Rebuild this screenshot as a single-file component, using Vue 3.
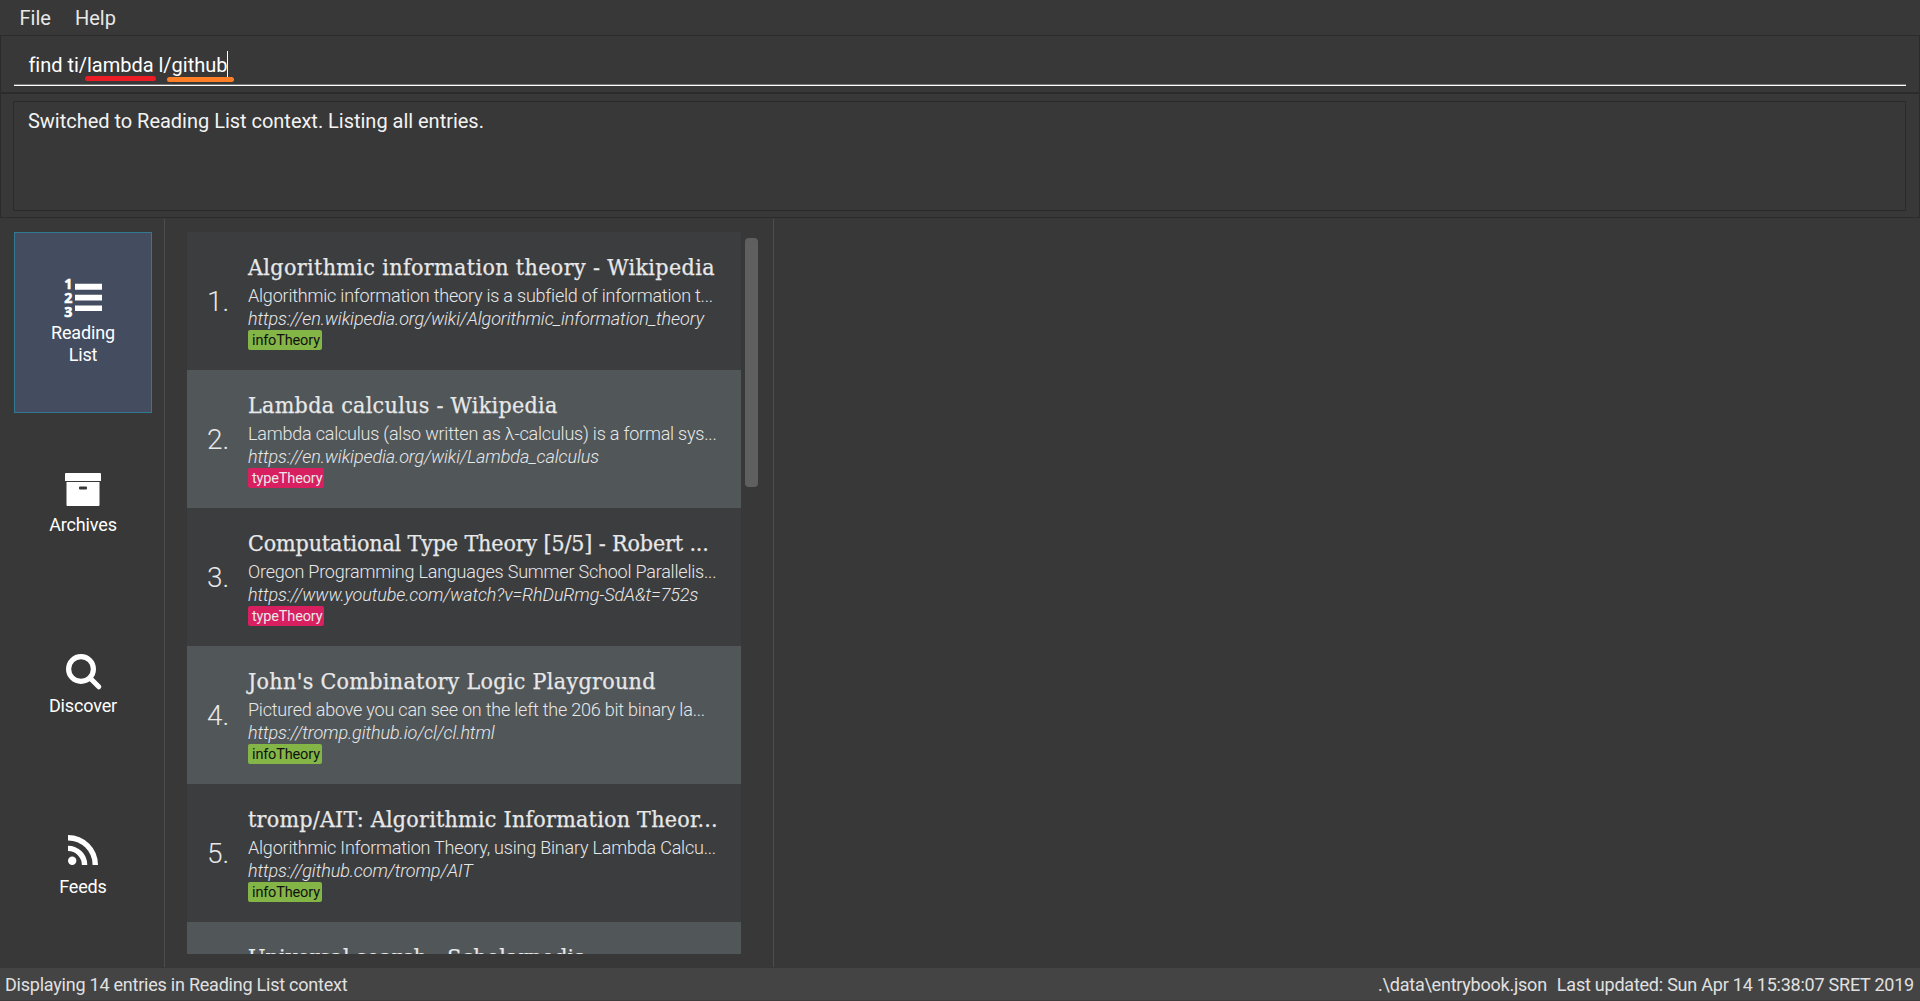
<script setup>
const entries = [
  { title: 'Algorithmic information theory - Wikipedia', spacing: 0.37, desc: 'Algorithmic information theory is a subfield of information t...', url: 'https://en.wikipedia.org/wiki/Algorithmic_information_theory', tag: 'infoTheory' },
  { title: 'Lambda calculus - Wikipedia', spacing: 0.3, desc: 'Lambda calculus (also written as λ-calculus) is a formal sys...', url: 'https://en.wikipedia.org/wiki/Lambda_calculus', tag: 'typeTheory' },
  { title: 'Computational Type Theory [5/5] - Robert ...', spacing: -0.13, desc: 'Oregon Programming Languages Summer School Parallelis...', url: 'https://www.youtube.com/watch?v=RhDuRmg-SdA&t=752s', tag: 'typeTheory' },
  { title: "John's Combinatory Logic Playground", spacing: 0.31, desc: 'Pictured above you can see on the left the 206 bit binary la...', url: 'https://tromp.github.io/cl/cl.html', tag: 'infoTheory' },
  { title: 'tromp/AIT: Algorithmic Information Theor...', spacing: 0.24, desc: 'Algorithmic Information Theory, using Binary Lambda Calcu...', url: 'https://github.com/tromp/AIT', tag: 'infoTheory' },
  { title: 'Universal search - Scholarpedia', spacing: 0.1 },
]
</script>

<template>
  <div class="window">
    <nav class="menubar"><span>File</span><span>Help</span></nav>

    <section class="command">
      <div class="field">
        <span>find ti/</span><span class="word red">lambda</span><span>&nbsp;l/</span><span class="word orange">github</span><i class="caret"></i>
      </div>
    </section>

    <section class="result">
      <div class="message">Switched to Reading List context. Listing all entries.</div>
    </section>

    <main class="content">
      <aside class="contexts">
        <div class="context selected">
          <svg width="40" height="40" viewBox="0 0 40 40">
            <g class="digits">
              <text x="0.3" y="11.2" textLength="8" lengthAdjust="spacingAndGlyphs">1</text>
              <text x="0.3" y="25" textLength="8" lengthAdjust="spacingAndGlyphs">2</text>
              <text x="0.3" y="38.6" textLength="8" lengthAdjust="spacingAndGlyphs">3</text>
            </g>
            <path d="M11 5.7h27v6H11zM11 16.7h27v5.7H11zM11 27.4h27v5.7H11z" />
          </svg>
          <span>Reading<br />List</span>
        </div>
        <div class="context archives">
          <svg width="36" height="34" viewBox="0 0 36 34">
            <path d="M1 0h34q1 0 1 1v7H0V1q0-1 1-1z" />
            <path fill-rule="evenodd" d="M1.500 9h33v23q0 1-1 1h-31q-1 0-1-1zM15 13.500q-1 0-1 1v1q0 1 1 1h6q1 0 1-1v-1q0-1-1-1z" />
          </svg>
          <span>Archives</span>
        </div>
        <div class="context discover">
          <svg width="36" height="36" viewBox="0 0 36 36">
            <circle cx="15" cy="15" r="12.400" class="stroke" />
            <path class="stroke handle" d="M24.500 24.500L32.800 32.800" />
          </svg>
          <span>Discover</span>
        </div>
        <div class="context feeds">
          <svg width="30" height="30" viewBox="0 0 30 30">
            <circle cx="4.200" cy="25.800" r="4.200" />
            <path class="stroke arc" d="M0 13.400A16.600 16.600 0 0 1 16.600 30M0 2.700A27.300 27.300 0 0 1 27.300 30" />
          </svg>
          <span>Feeds</span>
        </div>
      </aside>

      <section class="list-pane">
        <div class="list">
          <article v-for="(e, i) in entries" :key="i" class="entry">
            <div class="number"><span v-if="e.desc">{{ i + 1 }}.</span></div>
            <div class="details">
              <h2 :style="{ letterSpacing: e.spacing + 'px' }">{{ e.title }}</h2>
              <template v-if="e.desc">
                <p>{{ e.desc }}</p>
                <p class="url">{{ e.url }}</p>
                <span class="tag" :class="e.tag">{{ e.tag }}</span>
              </template>
            </div>
          </article>
        </div>
        <div class="track"><div class="thumb"></div></div>
      </section>
    </main>

    <footer class="status">
      <span class="count">Displaying 14 entries in Reading List context</span>
      <span class="file">.\data\entrybook.json</span>
      <span class="updated">Last updated: Sun Apr 14 15:38:07 SRET 2019</span>
    </footer>
  </div>
</template>

<style>
body { margin: 0; background: #383838; }
</style>

<style scoped>
* { box-sizing: border-box; }
.window {
  display: flex;
  flex-direction: column;
  width: 1920px;
  height: 1001px;
  overflow: hidden;
  background: #383838;
  color: #fff;
  font-family: Roboto, sans-serif;
  white-space: nowrap;
}
.menubar {
  display: flex;
  gap: 24px;
  height: 35px;
  padding: 6px 19.500px 0;
  font-size: 20px;
  line-height: 24px;
  color: #e8e8e8;
}
.command {
  height: 58px;
  padding: 13px 13px 0;
  border: 1px solid #2b2b2b;
}
.field {
  display: flex;
  height: 37px;
  padding: 4px 14.400px 0;
  border-bottom: 1px solid #fff;
  box-shadow: inset 0 -1px #777;
  font-size: 20px;
  line-height: 24px;
  letter-spacing: -0.02px;
}
.word { position: relative; }
.word::after {
  content: '';
  position: absolute;
  top: 23px;
  left: -2px;
  width: 71px;
  height: 5px;
  border-radius: 3px;
  background: #ed1c24;
}
.word.orange::after {
  top: 24px;
  left: -5px;
  width: 67px;
  background: #ff7f27;
}
.caret { width: 1px; height: 26px; margin-top: -2px; background: #fff; }
.result {
  height: 125px;
  padding: 7px 13px 0 12px;
  border: 1px solid #2b2b2b;
}
.message {
  height: 110px;
  padding: 7px 14px;
  border: 1px solid #2b2b2b;
  font-size: 20px;
  line-height: 24px;
  letter-spacing: -0.02px;
  color: #f3f3f3;
}
.content { display: flex; height: 750px; padding-top: 1px; }
.contexts {
  width: 165px;
  height: 748px;
  padding: 13px 12px 0 14px;
  border-right: 1px solid #4d4d4d;
}
.context {
  display: flex;
  flex-direction: column;
  align-items: center;
  height: 181px;
  padding-top: 60px;
  font-size: 18px;
  line-height: 22px;
  letter-spacing: -0.15px;
  text-align: center;
}
.context svg { fill: #fff; margin-bottom: 5px; overflow: visible; flex: none; }
.context.selected {
  padding-top: 45px;
  border: 1px solid #327a93;
  background: #434d5f;
}
.context.selected svg { margin-bottom: 4px; position: relative; left: 1px; }
.digits { font: bold 15px "Open Sans", sans-serif; stroke: #fff; stroke-width: 0.6; }
.archives svg { margin-bottom: 7px; }
.stroke { fill: none; stroke: #fff; stroke-width: 5.2; }
.handle { stroke-width: 5; stroke-linecap: round; }
.arc { stroke-width: 5.4; }
.discover svg { margin-bottom: 5px; position: relative; left: 1px; }
.feeds svg { margin-bottom: 11px; }
.list-pane {
  display: flex;
  width: 609px;
  height: 748px;
  padding: 13px 0 13px 22px;
  border-right: 1px solid #4d4d4d;
}
.list { width: 554px; height: 722px; overflow: hidden; }
.entry { display: flex; height: 138px; background: #3c3d3f; color: #e8e8e8; }
.entry:nth-child(even) { background: #515658; }
.number {
  width: 61px;
  padding: 52px 0 0 20px;
  font-size: 28px;
  font-weight: 300;
  line-height: 36px;
}
.details { padding-top: 19px; }
h2 {
  margin: 0 0 1px;
  font: 400 23px/32px "DejaVu Serif Condensed", "DejaVu Serif", serif;
  font-stretch: condensed;
  -webkit-text-stroke: 0.25px currentColor;
}
p { margin: 0; font-size: 18px; font-weight: 300; line-height: 23px; letter-spacing: -0.21px; }
.url { font-style: italic; letter-spacing: -0.1px; }
.tag {
  display: block;
  width: 74px;
  height: 20px;
  padding-left: 4px;
  border-radius: 2px;
  font-size: 14.500px;
  line-height: 21px;
  letter-spacing: -0.15px;
}
.infoTheory { background: #83b547; color: #111; }
.typeTheory { width: 76px; background: #d81f60; }
.track { padding: 6px 0 0 4px; }
.thumb { width: 13px; height: 249px; border-radius: 4px; background: #5f5f5f; }
.status {
  display: flex;
  height: 33px;
  padding: 6px 6px 0 5px;
  border-bottom: 1px solid #3c3c3c;
  background: #444;
  font-size: 18px;
  line-height: 22px;
  letter-spacing: -0.23px;
  color: #e0e0e0;
}
.count { flex: 1; }
.file { margin-right: 10px; }
</style>
